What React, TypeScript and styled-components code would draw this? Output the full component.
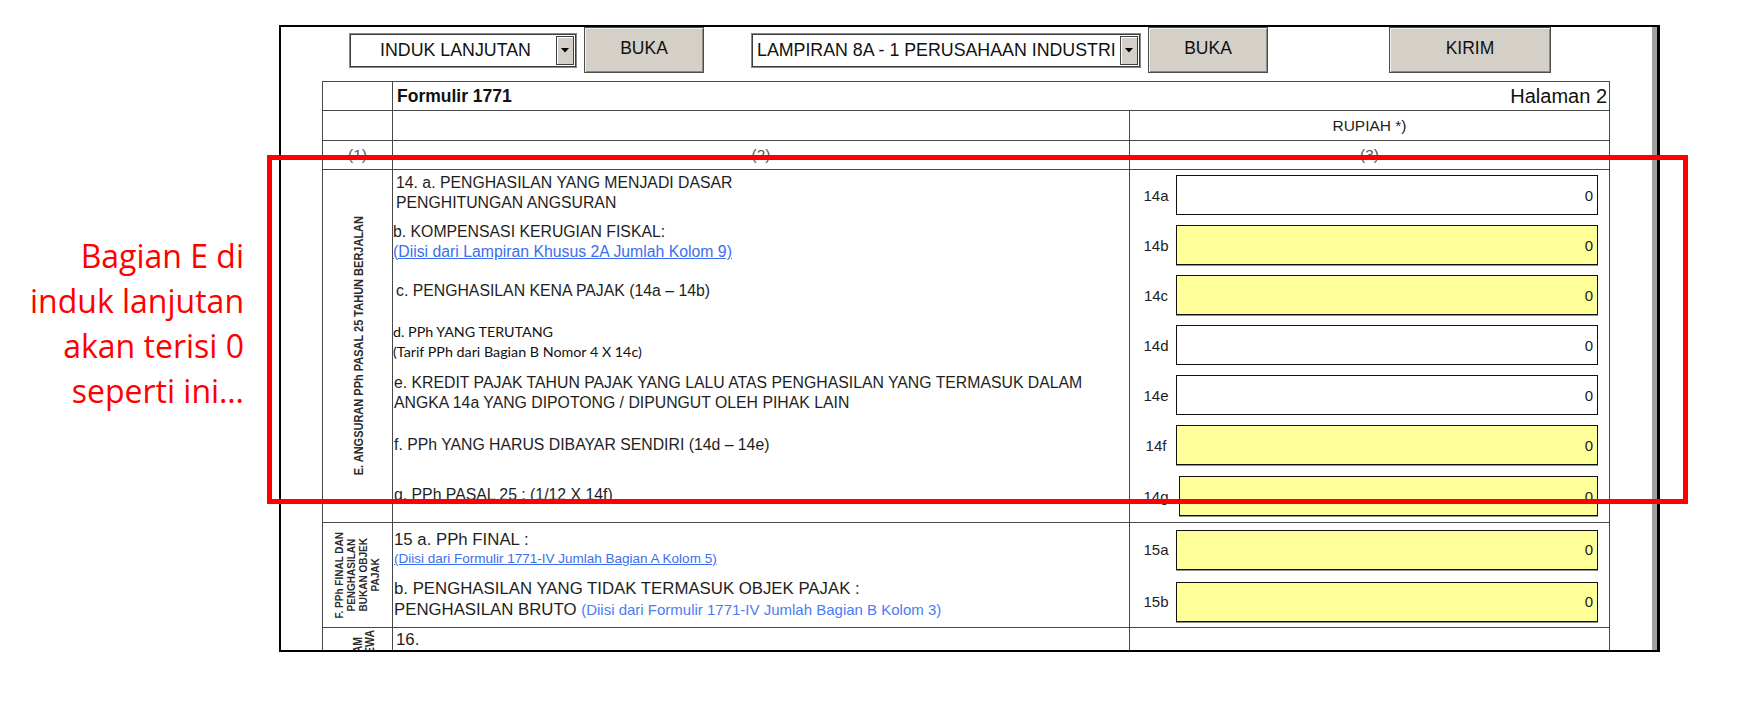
import React from "react";
import styled, { createGlobalStyle, css } from "styled-components";

const GlobalStyle = createGlobalStyle`
  html, body { margin: 0; padding: 0; background: #ffffff; }
  body { font-family: "Liberation Sans", Arial, sans-serif; color: #1e1e1e; }
  * { box-sizing: border-box; }
`;

const LINE = "#474747";

const Page = styled.div`
  position: relative;
  width: 1740px;
  height: 704px;
  display: flex;
  align-items: flex-start;
  padding-top: 25px;
`;

const Note = styled.p`
  margin: 0;
  width: 279px;
  padding: 208px 35px 0 0;
  text-align: right;
  font-family: "Open Sans", "Noto Sans", sans-serif;
  font-size: 32px;
  line-height: 45px;
  color: #ff0000;
`;

const Frame = styled.div`
  width: 1381px;
  height: 627px;
  border: 2px solid #000;
  border-right-width: 3px;
  overflow: hidden;
  display: flex;
  background: #fff;
`;

const Sheet = styled.div`
  flex: 1;
  min-width: 0;
`;

const ScrollEdge = styled.div`
  width: 5px;
  background: #a0a0a0;
`;

const Toolbar = styled.div`
  display: flex;
  align-items: center;
  height: 46px;
  padding-left: 68px;
`;

const ToolGroup = styled.div<{ $before?: number }>`
  display: flex;
  align-items: center;
  gap: 7px;
  margin-left: ${(p) => p.$before ?? 0}px;
`;

const Select = styled.div<{ $w: number }>`
  width: ${(p) => p.$w}px;
  height: 35px;
  display: flex;
  align-items: center;
  padding: 2px;
  background: #fff;
  border: 1px solid #8a8a8a;
  box-shadow: inset 0 0 0 1px #3c3c3c;
`;

const SelectValue = styled.span<{ $center?: boolean }>`
  flex: 1;
  min-width: 0;
  padding-left: 3px;
  font-size: 17.8px;
  color: #111;
  white-space: nowrap;
  overflow: hidden;
  text-align: ${(p) => (p.$center ? "center" : "left")};
`;

const SelectArrow = styled.span`
  width: 18px;
  height: 29px;
  display: flex;
  align-items: center;
  justify-content: center;
  background: #d4d0c8;
  border: 1px solid #404040;
  box-shadow: inset 1px 1px 0 #ffffff;
`;

const Button = styled.button<{ $w: number }>`
  width: ${(p) => p.$w}px;
  height: 46px;
  padding: 0 0 3px;
  background: #d4d0c8;
  border: 1px solid #4d4d4d;
  box-shadow: inset 1px 1px 0 #f2f0ec, inset -1px -1px 0 #8d8a83;
  font-family: "Liberation Sans", Arial, sans-serif;
  font-size: 17.5px;
  color: #111;
`;

const Table = styled.div`
  width: 1288px;
  margin: 8px 0 0 41px;
  border: 1px solid ${LINE};
  border-bottom: none;
`;

const HeadRow = styled.div<{ $cols: string; $h: number }>`
  display: grid;
  grid-template-columns: ${(p) => p.$cols};
  height: ${(p) => p.$h}px;
  border-bottom: 1px solid ${LINE};
`;

const HeadCell = styled.div<{ $line?: boolean; $justify?: string; $pad?: string }>`
  display: flex;
  align-items: center;
  justify-content: ${(p) => p.$justify ?? "flex-start"};
  padding: ${(p) => p.$pad ?? "0"};
  min-width: 0;
  ${(p) =>
    p.$line &&
    css`
      border-right: 1px solid ${LINE};
    `}
`;

const FormTitle = styled.span`
  font-weight: bold;
  font-size: 17.5px;
  color: #111;
`;

const PageNo = styled.span`
  font-size: 20px;
  color: #111;
`;

const HeadText = styled.span<{ $muted?: boolean }>`
  font-size: 15.5px;
  color: ${(p) => (p.$muted ? "#555" : "#222")};
`;

const Section = styled.div<{ $open?: boolean }>`
  display: grid;
  grid-template-columns: 70px 1fr;
  ${(p) =>
    !p.$open &&
    css`
      border-bottom: 1px solid ${LINE};
    `}
`;

const SideCell = styled.div<{ $top?: boolean }>`
  display: flex;
  justify-content: center;
  align-items: ${(p) => (p.$top ? "flex-start" : "center")};
  padding-top: ${(p) => (p.$top ? 2 : 0)}px;
  border-right: 1px solid ${LINE};
`;

const SideLabel = styled.div<{ $size: number; $lh: number }>`
  writing-mode: vertical-rl;
  transform: rotate(180deg) scaleX(1.15);
  font-weight: bold;
  font-size: ${(p) => p.$size}px;
  line-height: ${(p) => p.$lh}px;
  text-align: center;
  color: #2b2b2b;
  white-space: nowrap;
`;

const Items = styled.div`
  display: flex;
  flex-direction: column;
`;

const ItemRow = styled.div<{ $h: number }>`
  display: grid;
  grid-template-columns: 737px 1fr;
  height: ${(p) => p.$h}px;
`;

const ItemText = styled.div<{ $indent?: number; $lift?: number; $top?: boolean; $size?: number }>`
  display: flex;
  flex-direction: column;
  justify-content: ${(p) => (p.$top ? "flex-start" : "center")};
  padding-left: ${(p) => p.$indent ?? 0}px;
  padding-bottom: ${(p) => p.$lift ?? 0}px;
  padding-top: ${(p) => (p.$top ? 2 : 0)}px;
  border-right: 1px solid ${LINE};
  font-size: ${(p) => p.$size ?? 15.8}px;
  line-height: 20px;
  white-space: nowrap;
  color: #1e1e1e;
`;

const Line = styled.span<{ $alt?: boolean; $lh?: number }>`
  display: block;
  ${(p) =>
    p.$lh &&
    css`
      line-height: ${p.$lh}px;
    `}
  ${(p) =>
    p.$alt &&
    css`
      font-family: Lato, "Open Sans", sans-serif;
      font-size: 14.3px;
      color: #111;
    `}
`;

const SourceLink = styled.span<{ $plain?: boolean; $size?: number }>`
  color: ${(p) => (p.$plain ? "#4a7cf3" : "#3c6ef0")};
  text-decoration: ${(p) => (p.$plain ? "none" : "underline")};
  ${(p) =>
    p.$size &&
    css`
      font-size: ${p.$size}px;
    `}
`;

const ValueCell = styled.div`
  display: flex;
  align-items: center;
  padding-left: 6px;
`;

const FieldLabel = styled.span`
  width: 40px;
  text-align: center;
  font-size: 15px;
  color: #222;
`;

const Field = styled.div<{ $fill: boolean; $inset?: number }>`
  width: ${(p) => 422 - (p.$inset ?? 0)}px;
  margin-left: ${(p) => p.$inset ?? 0}px;
  height: 40px;
  border: 1px solid #111;
  background: ${(p) => (p.$fill ? "#ffff99" : "#ffffff")};
  ${(p) =>
    p.$fill &&
    css`
      box-shadow: 0 1px 0 #8f8f8f;
    `}
  display: flex;
  align-items: center;
  justify-content: flex-end;
  padding-right: 4px;
  font-size: 15px;
  color: #222;
`;

const Highlight = styled.div`
  position: absolute;
  left: 267px;
  top: 155px;
  width: 1421px;
  height: 349px;
  border: 5px solid #ff0000;
  pointer-events: none;
`;

const Arrow = () => (
  <svg width="8" height="5" viewBox="0 0 8 5">
    <path d="M0 0h8L4 4.5z" fill="#000" />
  </svg>
);

type Item = {
  code: string;
  fill: boolean;
  h: number;
  indent: number;
  lift?: number;
  inset?: number;
  size?: number;
  content: React.ReactNode;
};

const sectionE: Item[] = [
  {
    code: "14a",
    fill: false,
    h: 50,
    indent: 3,
    lift: 5,
    content: (
      <>
        <Line>14. a. PENGHASILAN YANG MENJADI DASAR</Line>
        <Line>PENGHITUNGAN ANGSURAN</Line>
      </>
    ),
  },
  {
    code: "14b",
    fill: true,
    h: 50,
    indent: 0,
    lift: 7,
    content: (
      <>
        <Line>b. KOMPENSASI KERUGIAN FISKAL:</Line>
        <Line>
          <SourceLink>(Diisi dari Lampiran Khusus 2A Jumlah Kolom 9)</SourceLink>
        </Line>
      </>
    ),
  },
  {
    code: "14c",
    fill: true,
    h: 50,
    indent: 3,
    lift: 9,
    content: <Line>c. PENGHASILAN KENA PAJAK (14a – 14b)</Line>,
  },
  {
    code: "14d",
    fill: false,
    h: 50,
    indent: 0,
    lift: 7,
    content: (
      <>
        <Line $alt>d. PPh YANG TERUTANG</Line>
        <Line $alt>(Tarif PPh dari Bagian B Nomor 4 X 14c)</Line>
      </>
    ),
  },
  {
    code: "14e",
    fill: false,
    h: 50,
    indent: 1,
    lift: 5,
    content: (
      <>
        <Line>e. KREDIT PAJAK TAHUN PAJAK YANG LALU ATAS PENGHASILAN YANG TERMASUK DALAM</Line>
        <Line>ANGKA 14a YANG DIPOTONG / DIPUNGUT OLEH PIHAK LAIN</Line>
      </>
    ),
  },
  {
    code: "14f",
    fill: true,
    h: 50,
    indent: 1,
    lift: 0,
    content: <Line>f. PPh YANG HARUS DIBAYAR SENDIRI (14d – 14e)</Line>,
  },
  {
    code: "14g",
    fill: true,
    h: 52,
    indent: 1,
    lift: 2,
    inset: 3,
    content: <Line>g. PPh PASAL 25 : (1/12 X 14f)</Line>,
  },
];

const sectionF: Item[] = [
  {
    code: "15a",
    fill: true,
    h: 53,
    indent: 1,
    lift: 0,
    size: 16.8,
    content: (
      <>
        <Line $lh={18}>15 a. PPh FINAL :</Line>
        <Line $lh={18}>
          <SourceLink $size={13.5}>(Diisi dari Formulir 1771-IV Jumlah Bagian A Kolom 5)</SourceLink>
        </Line>
      </>
    ),
  },
  {
    code: "15b",
    fill: true,
    h: 51,
    indent: 1,
    lift: 6,
    size: 16.8,
    content: (
      <>
        <Line $lh={21}>b. PENGHASILAN YANG TIDAK TERMASUK OBJEK PAJAK :</Line>
        <Line $lh={21}>
          PENGHASILAN BRUTO{" "}
          <SourceLink $plain $size={15}>
            (Diisi dari Formulir 1771-IV Jumlah Bagian B Kolom 3)
          </SourceLink>
        </Line>
      </>
    ),
  },
];

const renderItems = (items: Item[]) =>
  items.map((it) => (
    <ItemRow key={it.code} $h={it.h}>
      <ItemText $indent={it.indent} $lift={it.lift} $size={it.size}>
        {it.content}
      </ItemText>
      <ValueCell>
        <FieldLabel>{it.code}</FieldLabel>
        <Field $fill={it.fill} $inset={it.inset}>
          0
        </Field>
      </ValueCell>
    </ItemRow>
  ));

export default function App() {
  return (
    <>
      <GlobalStyle />
      <Page>
        <Note>
          Bagian E di
          <br />
          induk lanjutan
          <br />
          akan terisi 0
          <br />
          seperti ini…
        </Note>
        <Frame>
          <Sheet>
            <Toolbar>
              <ToolGroup>
                <Select $w={228}>
                  <SelectValue $center>INDUK LANJUTAN</SelectValue>
                  <SelectArrow>
                    <Arrow />
                  </SelectArrow>
                </Select>
                <Button $w={120}>BUKA</Button>
              </ToolGroup>
              <ToolGroup $before={47}>
                <Select $w={390}>
                  <SelectValue>LAMPIRAN 8A - 1 PERUSAHAAN INDUSTRI</SelectValue>
                  <SelectArrow>
                    <Arrow />
                  </SelectArrow>
                </Select>
                <Button $w={120}>BUKA</Button>
              </ToolGroup>
              <ToolGroup $before={121}>
                <Button $w={162}>KIRIM</Button>
              </ToolGroup>
            </Toolbar>

            <Table>
              <HeadRow $cols="70px 1fr" $h={29}>
                <HeadCell $line />
                <HeadCell $justify="space-between" $pad="0 2px 0 4px">
                  <FormTitle>Formulir 1771</FormTitle>
                  <PageNo>Halaman 2</PageNo>
                </HeadCell>
              </HeadRow>
              <HeadRow $cols="70px 737px 1fr" $h={30}>
                <HeadCell $line />
                <HeadCell $line />
                <HeadCell $justify="center">
                  <HeadText>RUPIAH *)</HeadText>
                </HeadCell>
              </HeadRow>
              <HeadRow $cols="70px 737px 1fr" $h={29}>
                <HeadCell $line $justify="center">
                  <HeadText $muted>(1)</HeadText>
                </HeadCell>
                <HeadCell $line $justify="center">
                  <HeadText $muted>(2)</HeadText>
                </HeadCell>
                <HeadCell $justify="center">
                  <HeadText $muted>(3)</HeadText>
                </HeadCell>
              </HeadRow>

              <Section>
                <SideCell>
                  <SideLabel $size={11} $lh={12}>
                    E. ANGSURAN PPh PASAL 25 TAHUN BERJALAN
                  </SideLabel>
                </SideCell>
                <Items>{renderItems(sectionE)}</Items>
              </Section>

              <Section>
                <SideCell>
                  <SideLabel $size={10} $lh={10.5}>
                    F. PPh FINAL DAN
                    <br />
                    PENGHASILAN
                    <br />
                    BUKAN OBJEK
                    <br />
                    PAJAK
                  </SideLabel>
                </SideCell>
                <Items>{renderItems(sectionF)}</Items>
              </Section>

              <Section $open>
                <SideCell $top>
                  <SideLabel $size={10.5} $lh={10.5}>
                    G.
                    <br />
                    TRANSAKSI DALAM
                    <br />
                    HUBUNGAN ISTIMEWA
                  </SideLabel>
                </SideCell>
                <Items>
                  <ItemRow $h={40}>
                    <ItemText $indent={3} $top $size={16.8}>
                      <Line>16.</Line>
                    </ItemText>
                    <ValueCell />
                  </ItemRow>
                </Items>
              </Section>
            </Table>
          </Sheet>
          <ScrollEdge />
        </Frame>
        <Highlight />
      </Page>
    </>
  );
}
